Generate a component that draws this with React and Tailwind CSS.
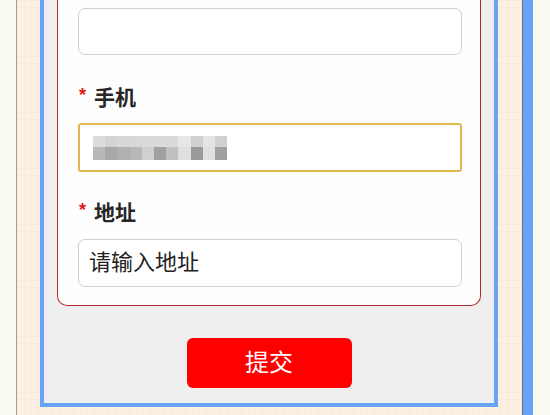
import React from "react";

const topRow = ["#dcdcdc", "#d4d4d4", "#d8d8d8", "#d8d8d8", "#dadada", "#dadada", "#dadada", "#e6e6e6", "#d0d0d0", "#e4e4e4", "#d0d0d0"];
const bottomRow = ["#b8b8b8", "#a8a8a8", "#b0b0b0", "#b8b8b8", "#d0d0d0", "#a0a0a0", "#c0c0c0", "#e0e0e0", "#9a9a9a", "#e0e0e0", "#a0a0a0"];

function Label({ text }) {
    return (
        <div className="flex items-center h-[28px] pl-[1px]">
            <span className="text-[#e01818] text-[18px] font-bold leading-none mr-[8px] -mt-[4px]">*</span>
            <span className="text-[21px] font-bold text-[#262626] leading-none">{text}</span>
        </div>
    )
}

export default function App() {
    return (
        <div className="flex h-[415px] w-[550px] overflow-hidden bg-[#fafaf1] font-[family-name:'Liberation_Sans','Noto_Sans_CJK_SC',sans-serif]">
            <div className="w-[16px] shrink-0" />
            <div className="w-px shrink-0 bg-[#a49d92]" />
            {/* peach grid area */}
            <div className="w-[505px] shrink-0 bg-[#fdf1e3] bg-[linear-gradient(to_right,#faeadb_1px,transparent_1px),linear-gradient(to_bottom,#f9ebdc_1px,transparent_1px)] bg-[size:7px_7px]">
                <div className="ml-[23px] w-[458px] h-[407px] border-x-4 border-b-4 border-[#68a4f6] bg-[#efefef] flex flex-col">
                    {/* form card */}
                    <div className="mx-[13px] bg-[#fefefe] border-x border-b border-[#b02c2c] rounded-b-[10px] pl-5 pr-[18px] pt-[8px] pb-[18px]">
                        <div className="h-[47px] w-[384px] rounded-[7px] border border-[#d0d0d0] bg-white" />

                        <div className="mt-[28px]">
                            <Label text="手机" />
                        </div>
                        <div className="mt-[12px] h-[49px] w-[384px] rounded-[3px] border-2 border-[#e2b74c] bg-white flex items-center pl-[13px]">
                            <div className="flex flex-col">
                                <div className="flex">
                                    {topRow.map((c, i) => (
                                        <div key={i} className="w-[12.2px] h-[11px]" style={{ background: c }} />
                                    ))}
                                </div>
                                <div className="flex">
                                    {bottomRow.map((c, i) => (
                                        <div key={i} className="w-[12.2px] h-[13px]" style={{ background: c }} />
                                    ))}
                                </div>
                            </div>
                        </div>

                        <div className="mt-[26px]">
                            <Label text="地址" />
                        </div>
                        <div className="mt-[13px] h-[48px] w-[384px] rounded-[7px] border border-[#d0d0d0] bg-white flex items-center pl-[10px]">
                            <span className="text-[22px] text-[#222] leading-none">请输入地址</span>
                        </div>
                    </div>

                    {/* submit */}
                    <div className="flex justify-center mt-[32px]">
                        <button className="w-[165px] h-[50px] rounded-[6px] bg-[#ff0000] text-white text-[24px] leading-none flex items-center justify-center">
                            提交
                        </button>
                    </div>
                </div>
            </div>
            <div className="w-px shrink-0 bg-[#6f6f6f]" />
            <div className="w-[10px] shrink-0 bg-[#68a4f6]" />
            <div className="flex-1" />
        </div>
    )
}
